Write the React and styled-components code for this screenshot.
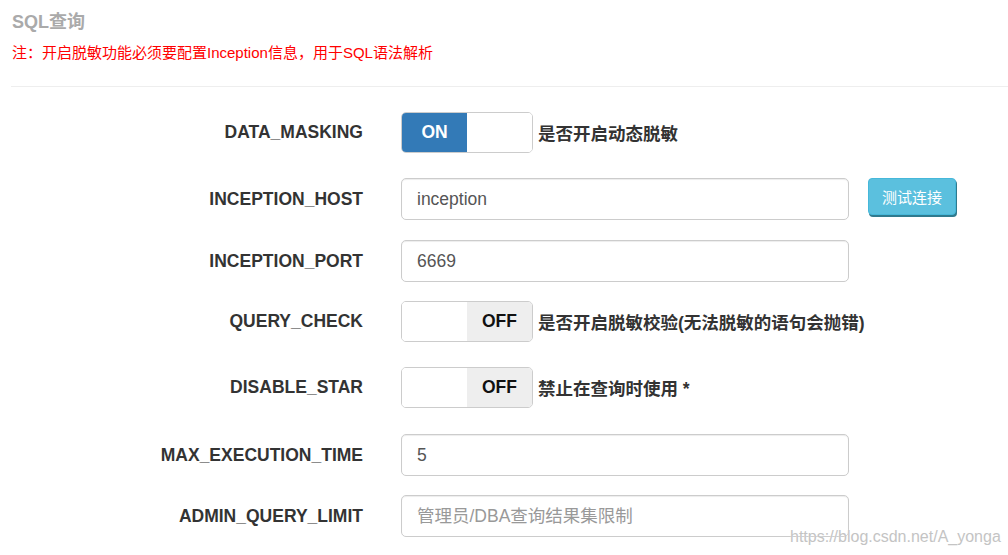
import React from "react";
import styled, { createGlobalStyle } from "styled-components";

const GlobalStyle = createGlobalStyle`
  html, body { margin: 0; padding: 0; background: #fff; }
  body {
    font-family: "Liberation Sans", Arial, "Noto Sans CJK SC", sans-serif;
    color: #333;
  }
  * { box-sizing: border-box; }
`;

const Page = styled.div`
  position: relative;
  width: 1008px;
  height: 555px;
  overflow: hidden;
  padding: 12px 0 0 11px;
`;

const Title = styled.h4`
  margin: 0 0 0 1px;
  font-size: 18px;
  line-height: 20px;
  font-weight: bold;
  color: #aaaaaa;
`;

const Note = styled.p`
  margin: 11px 0 0 1px;
  font-size: 15px;
  line-height: 20px;
  color: #ff0000;
`;

const Divider = styled.hr`
  margin: 23px 0 0 0;
  border: 0;
  border-top: 1px solid #eeeeee;
  height: 0;
`;

const Form = styled.div`
  margin: 25px 0 0 -11px;
  display: flex;
  flex-direction: column;
`;

const Row = styled.div`
  display: grid;
  grid-template-columns: 401px 448px auto;
  align-items: center;
  margin-bottom: ${(p) => p.$mb}px;
`;

const Label = styled.label`
  padding-right: 38px;
  text-align: right;
  font-size: 17.5px;
  font-weight: bold;
  color: #333;
  white-space: nowrap;
`;

const Control = styled.div`
  display: flex;
  align-items: center;
  gap: 5px;
  white-space: nowrap;
`;

const Switch = styled.div`
  display: flex;
  flex: none;
  width: 132px;
  height: 41px;
  border: 1px solid #cccccc;
  border-radius: 5px;
  overflow: hidden;
  background: #fff;
`;

const SwitchPart = styled.span`
  width: 65px;
  display: flex;
  align-items: center;
  justify-content: center;
  font-size: 17.5px;
  font-weight: bold;
  background: ${(p) => (p.$on ? "#337ab7" : p.$off ? "#eeeeee" : "#ffffff")};
  color: ${(p) => (p.$on ? "#ffffff" : "#111")};
`;

const Desc = styled.span`
  font-size: 17.5px;
  font-weight: bold;
  color: #333;
`;

const Input = styled.input`
  width: 448px;
  height: 42px;
  border: 1px solid #cccccc;
  border-radius: 5px;
  padding: 0 15px;
  font-family: "Liberation Sans", Arial, "Noto Sans CJK SC", sans-serif;
  font-size: 17.5px;
  color: #555;
  box-shadow: inset 0 1px 1px rgba(0, 0, 0, 0.075);
  outline: none;
  &::placeholder {
    color: #999;
  }
`;

const Button = styled.button`
  margin-left: 19px;
  width: 88px;
  height: 37px;
  align-self: start;
  justify-self: start;
  border: 1px solid #46b8da;
  border-radius: 4px;
  background: #5bc0de;
  box-shadow: 1px 2px 0 #2f7a8e;
  color: #fff;
  font-family: "Liberation Sans", Arial, "Noto Sans CJK SC", sans-serif;
  font-size: 15px;
  padding: 0;
`;

const Watermark = styled.div`
  position: absolute;
  left: 790px;
  top: 528px;
  font-size: 16px;
  line-height: 18px;
  color: #c4c4c4;
  text-shadow: 0 0 1px #fff;
  white-space: nowrap;
`;

const SwitchField = ({ on }) => (
  <Switch>
    {on ? (
      <>
        <SwitchPart $on>ON</SwitchPart>
        <SwitchPart />
      </>
    ) : (
      <>
        <SwitchPart />
        <SwitchPart $off>OFF</SwitchPart>
      </>
    )}
  </Switch>
);

export default function App() {
  return (
    <>
      <GlobalStyle />
      <Page>
        <Title>SQL查询</Title>
        <Note>注：开启脱敏功能必须要配置Inception信息，用于SQL语法解析</Note>
        <Divider />
        <Form>
          <Row $mb={25}>
            <Label>DATA_MASKING</Label>
            <Control>
              <SwitchField on />
              <Desc>是否开启动态脱敏</Desc>
            </Control>
          </Row>
          <Row $mb={20}>
            <Label>INCEPTION_HOST</Label>
            <Control>
              <Input defaultValue="inception" />
            </Control>
            <Button>测试连接</Button>
          </Row>
          <Row $mb={19}>
            <Label>INCEPTION_PORT</Label>
            <Control>
              <Input defaultValue="6669" />
            </Control>
          </Row>
          <Row $mb={25}>
            <Label>QUERY_CHECK</Label>
            <Control>
              <SwitchField />
              <Desc>是否开启脱敏校验(无法脱敏的语句会抛错)</Desc>
            </Control>
          </Row>
          <Row $mb={26}>
            <Label>DISABLE_STAR</Label>
            <Control>
              <SwitchField />
              <Desc>禁止在查询时使用 *</Desc>
            </Control>
          </Row>
          <Row $mb={19}>
            <Label>MAX_EXECUTION_TIME</Label>
            <Control>
              <Input defaultValue="5" />
            </Control>
          </Row>
          <Row $mb={0}>
            <Label>ADMIN_QUERY_LIMIT</Label>
            <Control>
              <Input placeholder="管理员/DBA查询结果集限制" />
            </Control>
          </Row>
        </Form>
        <Watermark>https://blog.csdn.net/A_yonga</Watermark>
      </Page>
    </>
  );
}
